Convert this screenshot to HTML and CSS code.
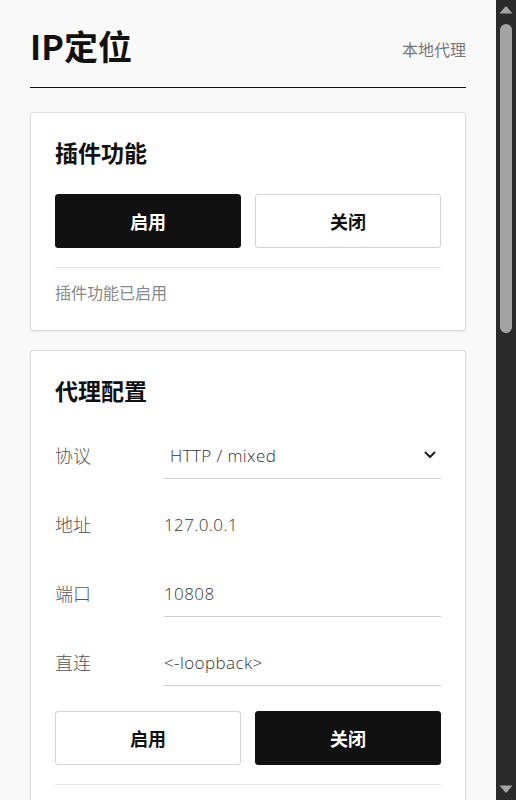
FILE: index.html
```html
<!DOCTYPE html>
<html lang="zh-CN">
<head>
<meta charset="utf-8">
<title>IP定位</title>
<link rel="stylesheet" href="styles.css">
</head>
<body>
<div class="app">
  <div class="viewport">
    <div class="page">
      <header class="header">
        <h1 class="title">IP定位</h1>
        <span class="subtitle">本地代理</span>
      </header>

      <section class="card">
        <h2 class="card-title">插件功能</h2>
        <div class="btn-row">
          <button class="btn btn-dark">启用</button>
          <button class="btn btn-light">关闭</button>
        </div>
        <div class="divider"></div>
        <p class="status">插件功能已启用</p>
      </section>

      <section class="card card-tall">
        <h2 class="card-title">代理配置</h2>
        <div class="form">
          <div class="row">
            <span class="label">协议</span>
            <div class="field select">
              <span class="value">HTTP / mixed</span>
              <svg class="chevron" width="12" height="8" viewBox="0 0 12 8"><path d="M1.5 1.5 L6 6 L10.5 1.5" fill="none" stroke="#222" stroke-width="2" stroke-linecap="round" stroke-linejoin="round"/></svg>
            </div>
          </div>
          <div class="row">
            <span class="label">地址</span>
            <div class="field plain"><span class="value">127.0.0.1</span></div>
          </div>
          <div class="row">
            <span class="label">端口</span>
            <div class="field"><span class="value">10808</span></div>
          </div>
          <div class="row">
            <span class="label">直连</span>
            <div class="field"><span class="value">&lt;-loopback&gt;</span></div>
          </div>
        </div>
        <div class="btn-row">
          <button class="btn btn-light">启用</button>
          <button class="btn btn-dark">关闭</button>
        </div>
        <div class="divider"></div>
      </section>
    </div>
  </div>
  <div class="scrollbar" aria-hidden="true">
    <svg class="arrow-up" width="14" height="8" viewBox="0 0 14 8"><path d="M6.2 0.8 Q7 0 7.8 0.8 L13.5 7.5 L0.5 7.5 Z" fill="#a3a3a3"/></svg>
    <div class="thumb"></div>
    <div class="track-rest"></div>
    <svg class="arrow-down" width="14" height="8" viewBox="0 0 14 8"><path d="M0.5 0.5 L13.5 0.5 L7.8 7.2 Q7 8 6.2 7.2 Z" fill="#a3a3a3"/></svg>
  </div>
</div>
</body>
</html>
```
FILE: styles.css
```css
html, body {
  margin: 0;
  height: 100%;
  overflow: hidden;
}
body {
  background: #f9f9f9;
  color: #111;
  font-family: "Noto Sans CJK SC", "Noto Sans", sans-serif;
}
.app {
  display: flex;
  height: 100vh;
}
.viewport {
  flex: 1;
  min-width: 0;
  overflow: hidden;
  background: #f9f9f9;
}
.scrollbar {
  flex: none;
  width: 20px;
  background: #2b2b2b;
  display: flex;
  flex-direction: column;
  align-items: center;
}
.arrow-up {
  display: block;
  margin-top: 6px;
}
.thumb {
  width: 12px;
  height: 309px;
  margin-top: 10px;
  border-radius: 6px;
  background: #a3a3a3;
}
.track-rest {
  flex: 1;
}
.arrow-down {
  display: block;
  margin-bottom: 7px;
}
.page {
  padding: 0 30px 40px;
}
.header {
  display: flex;
  justify-content: space-between;
  align-items: center;
  padding: 24px 0 19px;
  border-bottom: 1px solid #111;
}
.title {
  margin: 0;
  font-size: 34px;
  line-height: 44px;
  font-weight: 700;
  color: #111;
}
.subtitle {
  font-size: 16px;
  color: #777;
  padding-top: 6px;
}
.card {
  margin-top: 24px;
  background: #fff;
  border: 1px solid #dcdcdc;
  border-radius: 3px;
  box-shadow: 0 1px 3px rgba(0, 0, 0, 0.07);
  padding: 21px 24px 26px;
}
.card + .card {
  margin-top: 19px;
}
.card-tall {
  padding-bottom: 60px;
}
.card-title {
  margin: 0;
  font-size: 23px;
  line-height: 36px;
  font-weight: 700;
  color: #111;
}
.btn-row {
  display: grid;
  grid-template-columns: 1fr 1fr;
  gap: 14px;
  margin-top: 24px;
}
.form + .btn-row {
  margin-top: 25px;
}
.btn {
  height: 54px;
  border-radius: 3px;
  font-family: "Noto Sans CJK SC", sans-serif;
  font-size: 18px;
  font-weight: 700;
  cursor: pointer;
}
.btn-dark {
  background: #111;
  color: #fff;
  border: 1px solid #111;
}
.btn-light {
  background: #fff;
  color: #111;
  border: 1px solid #d4d4d4;
}
.divider {
  height: 1px;
  background: #e6e6e6;
  margin-top: 19px;
}
.status {
  margin: 12px 0 0;
  font-size: 16px;
  line-height: 24px;
  color: #888;
}
.form {
  display: flex;
  flex-direction: column;
  gap: 21px;
  margin-top: 23px;
}
.row {
  display: grid;
  grid-template-columns: 109px 1fr;
  align-items: center;
}
.label {
  font-size: 18px;
  font-weight: 300;
  color: #555;
}
.field {
  height: 48px;
  box-sizing: border-box;
  border-bottom: 1px solid #cfcfcf;
  display: flex;
  align-items: center;
  justify-content: space-between;
  padding-top: 1px;
}
.field.plain {
  border-bottom-color: transparent;
}
.field.select {
  padding-left: 6px;
  padding-right: 5px;
}
.value {
  font-family: "Open Sans", "Noto Sans CJK SC", sans-serif;
  font-size: 17px;
  font-weight: 300;
  letter-spacing: 0.4px;
  color: #333;
}
.chevron {
  display: block;
}
```
